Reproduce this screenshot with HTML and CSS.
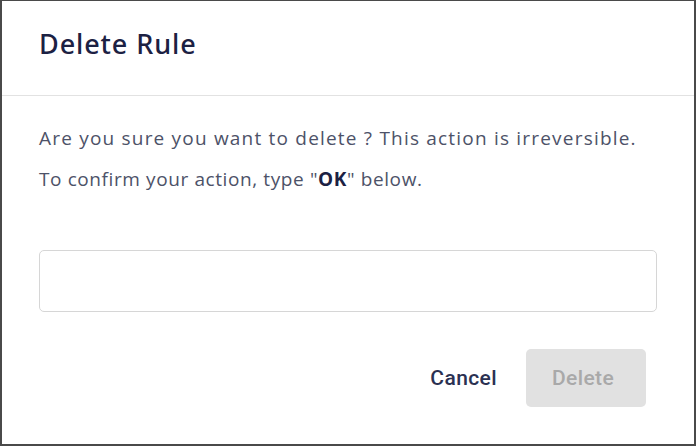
FILE: index.html
```html
<!DOCTYPE html>
<html>
<head>
<meta charset="utf-8">
<link rel="stylesheet" href="styles.css">
</head>
<body>
<div class="frame">
  <div class="header"><h1 class="title">Delete Rule</h1></div>
  <div class="content">
    <p class="msg first">Are you sure you want to delete ? This action is irreversible.</p>
    <p class="msg second">To confirm your action, type "<b>OK</b>" below.</p>
    <input class="confirm" type="text">
  </div>
  <div class="footer">
    <button class="btn cancel">Cancel</button>
    <button class="btn delete" disabled>Delete</button>
  </div>
</div>
</body>
</html>
```
FILE: styles.css
```css
html, body { margin: 0; padding: 0; background: #fff; }
.frame {
  width: 696px; height: 446px; box-sizing: border-box;
  border: 1px solid #4a4a4a; border-left-width: 2px; border-right-width: 2px; border-bottom-width: 2px;
  background: #fff; display: flex; flex-direction: column;
  font-family: "Open Sans", "Noto Sans", sans-serif;
}
.header {
  height: 95px; box-sizing: border-box; border-bottom: 1px solid #e2e2e2;
  padding: 25px 0 0 37px;
}
.title { margin: 0; font-size: 27px; line-height: 36px; font-weight: 500; color: #1c2143; font-family: "Noto Sans", sans-serif; letter-spacing: 0.9px; }
.content { padding: 0 37px; display: flex; flex-direction: column; }
.msg { margin: 0; font-size: 19px; color: #4d5268; line-height: 24px; }
.msg b { color: #1c2143; font-weight: 700; }
.first { margin-top: 30px; letter-spacing: 1.2px; }
.second { margin-top: 17px; letter-spacing: 0.6px; }
.confirm {
  margin-top: 59px; height: 62px; box-sizing: border-box; width: 618px;
  border: 1px solid #d6d6d6; border-radius: 5px; outline: none; font-size: 16px;
}
.footer { display: flex; justify-content: flex-end; align-items: center; gap: 29px; padding-right: 48px; margin-top: 37px; }
.btn { border: none; background: none; font-family: Roboto, sans-serif; font-weight: 500; font-size: 21px; letter-spacing: 0.4px; padding: 0; }
.cancel { color: #2b3152; }
.delete { width: 120px; height: 58px; background: #e1e1e1; color: #a9a9a9; border-radius: 5px; padding-right: 6px; }
```
